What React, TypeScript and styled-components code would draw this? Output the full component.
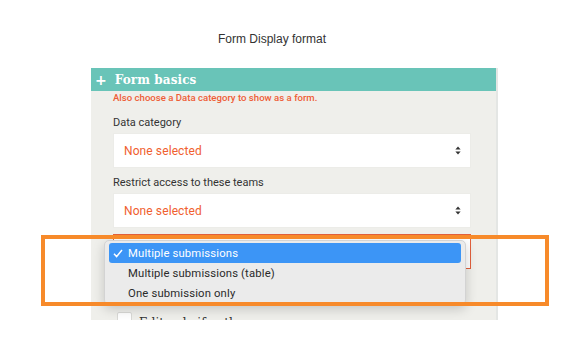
import React from "react";
import styled, { createGlobalStyle } from "styled-components";

const Global = createGlobalStyle`
  html, body { margin: 0; padding: 0; background: #ffffff; }
  body { font-family: Roboto, "Liberation Sans", sans-serif; }
`;

const Page = styled.div`
  position: relative;
  width: 586px;
  height: 353px;
  overflow: hidden;
  background: #ffffff;
`;

const Title = styled.div`
  padding: 32px 0 0 218px;
  height: 36px;
  box-sizing: border-box;
  font-family: "Liberation Sans", Arial, sans-serif;
  font-size: 12px;
  line-height: 14px;
  color: #333333;
`;

const Panel = styled.div`
  margin: 32px 0 0 91px;
  width: 405px;
  height: 252px;
  overflow: hidden;
  background: #efefeb;
  border-right: 2px solid #e4e6e4;
`;

const Header = styled.div`
  height: 23px;
  background: #69c4b8;
  display: flex;
  align-items: center;
  gap: 8px;
  padding-left: 4px;
  color: #ffffff;
`;

const Plus = styled.span`
  font-family: "DejaVu Sans", sans-serif;
  font-size: 14px;
  font-weight: bold;
  line-height: 1;
`;

const HeaderText = styled.span`
  font-family: "DejaVu Serif", serif;
  font-weight: bold;
  font-size: 12px;
  letter-spacing: 0.1px;
`;

const Body = styled.div`
  padding: 1px 25px 0 22px;
  display: flex;
  flex-direction: column;
`;

const Note = styled.div`
  font-size: 9.6px;
  font-weight: 500;
  color: #ee5d36;
  line-height: 12px;
`;

const Label = styled.div<{ $top: number }>`
  margin-top: ${(p) => p.$top}px;
  font-size: 11px;
  color: #333333;
  line-height: 13px;
`;

const Select = styled.div<{ $top: number; $error?: boolean }>`
  margin-top: ${(p) => p.$top}px;
  height: 35px;
  box-sizing: border-box;
  background: #ffffff;
  border: 1px solid ${(p) => (p.$error ? "#e2603d" : "#ecece8")};
  display: flex;
  align-items: center;
  justify-content: space-between;
  padding: 0 9px 0 10px;
`;

const SelectValue = styled.span`
  font-size: 12px;
  color: #f0602f;
  letter-spacing: 0.1px;
`;

const CheckRow = styled.div`
  margin-top: 43px;
  display: flex;
  align-items: flex-start;
  gap: 7px;
  padding-left: 4px;
`;

const CheckBox = styled.div`
  width: 15px;
  height: 15px;
  box-sizing: border-box;
  background: #ffffff;
  border: 1px solid #d9d9d6;
  border-radius: 2px;
`;

const CheckText = styled.span`
  font-family: "DejaVu Serif", serif;
  font-size: 12px;
  line-height: 14px;
  margin-top: 4px;
  color: #333;
`;

const Menu = styled.div`
  position: absolute;
  left: 104px;
  top: 240px;
  width: 362px;
  height: 65px;
  box-sizing: border-box;
  background: #ebebeb;
  border: 1px solid #d3d3d3;
  border-radius: 5px;
  box-shadow: 0 4px 12px rgba(0, 0, 0, 0.18);
  padding: 2px 4px;
  display: flex;
  flex-direction: column;
`;

const Item = styled.div<{ $active?: boolean }>`
  height: 20px;
  flex: none;
  display: flex;
  align-items: center;
  border-radius: 3px;
  padding-left: 4px;
  font-family: Roboto, "Liberation Sans", sans-serif;
  font-size: 11.3px;
  letter-spacing: 0.15px;
  color: ${(p) => (p.$active ? "#ffffff" : "#2a2a2a")};
  background: ${(p) => (p.$active ? "#3c95f6" : "transparent")};
`;

const Check = styled.span`
  width: 15px;
  display: inline-flex;
  align-items: center;
`;

const Highlight = styled.div`
  position: absolute;
  left: 41px;
  top: 235px;
  width: 508px;
  height: 71px;
  box-sizing: border-box;
  border: 4px solid #f78a2a;
  pointer-events: none;
`;

const Arrows = () => (
  <svg width="6" height="9" viewBox="0 0 6 9">
    <path d="M3 0.5 L5.6 3.6 H0.4 Z" fill="#333" />
    <path d="M3 8.5 L5.6 5.4 H0.4 Z" fill="#333" />
  </svg>
);

export default function App() {
  return (
    <Page>
      <Global />
      <Title>Form Display format</Title>
      <Panel>
        <Header>
          <Plus>+</Plus>
          <HeaderText>Form basics</HeaderText>
        </Header>
        <Body>
          <Note>Also choose a Data category to show as a form.</Note>
          <Label $top={12}>Data category</Label>
          <Select $top={4}>
            <SelectValue>None selected</SelectValue>
            <Arrows />
          </Select>
          <Label $top={8}>Restrict access to these teams</Label>
          <Select $top={4}>
            <SelectValue>None selected</SelectValue>
            <Arrows />
          </Select>
          <Select $top={6} $error>
            <span />
            <Arrows />
          </Select>
          <CheckRow>
            <CheckBox />
            <CheckText>Edit only if author</CheckText>
          </CheckRow>
        </Body>
      </Panel>
      <Menu>
        <Item $active>
          <Check>
            <svg width="10" height="9" viewBox="0 0 10 9">
              <path d="M1 4.8 L3.6 7.6 L9 1" fill="none" stroke="#fff" strokeWidth="1.5" />
            </svg>
          </Check>
          Multiple submissions
        </Item>
        <Item>
          <Check />
          Multiple submissions (table)
        </Item>
        <Item>
          <Check />
          One submission only
        </Item>
      </Menu>
      <Highlight />
    </Page>
  );
}
